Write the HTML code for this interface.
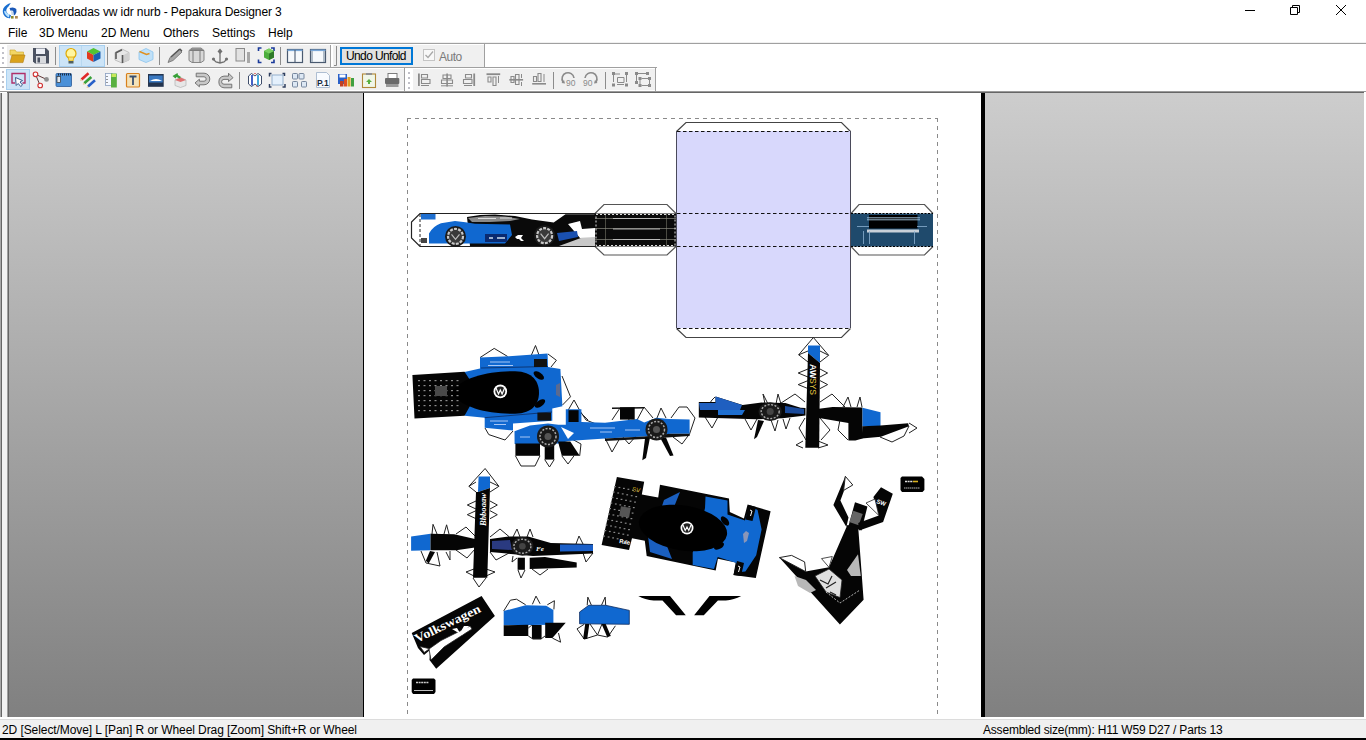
<!DOCTYPE html>
<html><head><meta charset="utf-8">
<style>
*{margin:0;padding:0;box-sizing:border-box}
html,body{width:1366px;height:740px;overflow:hidden;background:#fff;font-family:"Liberation Sans",sans-serif;font-size:12px;color:#000}
.abs{position:absolute}
#title{left:23px;top:5px;font-size:12px;line-height:14px;white-space:nowrap;letter-spacing:-0.1px;color:#000}
.menu{top:26px;font-size:12px;line-height:14px;white-space:nowrap}
.grad{background:linear-gradient(#cdcdcd,#808080)}
.st{font-size:12px;line-height:14px;white-space:nowrap;top:723px;color:#000}
svg{position:absolute;left:0;top:0}
</style></head><body>
<div class="abs" style="left:0;top:0;width:1366px;height:42px;background:#fff"></div>
<div class="abs" style="left:0;top:42px;width:1366px;height:1px;background:#f0f0f0"></div>
<div class="abs" style="left:0;top:43px;width:1366px;height:1px;background:#a0a0a0"></div>
<div class="abs" id="title">keroliverdadas vw idr nurb - Pepakura Designer 3</div>
<div class="abs menu" style="left:8px">File</div>
<div class="abs menu" style="left:39px">3D Menu</div>
<div class="abs menu" style="left:101px">2D Menu</div>
<div class="abs menu" style="left:163px">Others</div>
<div class="abs menu" style="left:212px">Settings</div>
<div class="abs menu" style="left:268px">Help</div>
<!-- toolbars -->
<div class="abs" style="left:7px;top:45px;width:324px;height:22px;background:#f0f0f0"></div>
<div class="abs" style="left:333px;top:45px;width:151px;height:22px;background:#f0f0f0"></div>
<div class="abs" style="left:0;top:67px;width:657px;height:1px;background:#a0a0a0"></div>
<div class="abs" style="left:7px;top:69px;width:398px;height:21px;background:#f0f0f0"></div>
<div class="abs" style="left:413px;top:69px;width:242px;height:21px;background:#f0f0f0"></div>
<!-- canvas -->
<div class="abs" style="left:0;top:91px;width:1366px;height:1px;background:#9a9a9a"></div>
<div class="abs" style="left:7px;top:92px;width:1357px;height:1px;background:#666"></div>
<div class="abs" style="left:0;top:93px;width:1px;height:624px;background:#a8a8a8"></div><div class="abs" style="left:1px;top:93px;width:1px;height:624px;background:#666"></div><div class="abs" style="left:2px;top:93px;width:5px;height:624px;background:#f2f2f2"></div>
<div class="abs" style="left:7px;top:93px;width:1px;height:624px;background:#a0a0a0"></div><div class="abs" style="left:8px;top:93px;width:1px;height:624px;background:#666"></div>
<div class="abs grad" style="left:9px;top:93px;width:354px;height:624px"></div>
<div class="abs" style="left:363px;top:93px;width:1px;height:624px;background:#000"></div>
<div class="abs" style="left:364px;top:93px;width:617px;height:624px;background:#fff"></div>
<div class="abs" style="left:981px;top:93px;width:4px;height:624px;background:#000"></div>
<div class="abs grad" style="left:985px;top:93px;width:379px;height:624px"></div>
<!-- status -->
<div class="abs" style="left:0;top:717px;width:1366px;height:2px;background:#fff"></div>
<div class="abs" style="left:0;top:719px;width:1366px;height:1px;background:#dcdcdc"></div>
<div class="abs" style="left:0;top:720px;width:1366px;height:18px;background:#f0f0f0"></div>
<div class="abs" style="left:0;top:738px;width:1366px;height:2px;background:#000"></div>
<div class="abs st" style="left:2px;letter-spacing:-0.08px">2D [Select/Move] L [Pan] R or Wheel Drag [Zoom] Shift+R or Wheel</div>
<div class="abs st" style="left:983px;letter-spacing:-0.2px">Assembled size(mm): H11 W59 D27 / Parts 13</div>
<svg width="1366" height="740" viewBox="0 0 1366 740">
<!-- app icon -->
<path d="M10.8 3 Q6 4 3.3 8.5 Q1.8 13 5 16.5 Q7 18.5 10 18.2 L11 15.2 Q8 15 6.5 12 Q5.5 9 8.5 6.5 Z" fill="#1a6fd0"/>
<path d="M4 11.5 Q5 15.5 9 17.5 L9.5 14.5 Q6.5 13.5 5 10.5Z" fill="#b8e2ff"/>
<path d="M9.5 8 Q14 6.5 16.3 9 Q17.2 12 15.3 14.5 L13.8 15.5 L13.3 11.5 Q12.8 10 10.5 10.8Z" fill="#1a58b8"/>
<path d="M11 11 L13 11.5 L13.5 15 L11.5 15z" fill="#c8d8e8"/>
<rect x="11" y="16" width="2.6" height="2.6" fill="#8a8a30"/><rect x="15" y="16" width="2.8" height="2.6" fill="#b08850"/>
<!-- window controls -->
<path d="M1245 10.5 h10" stroke="#000" stroke-width="1"/>
<path d="M1290.5 7.5 h7 v7 h-7z M1292.5 7.5 v-2 h7 v7 h-2" stroke="#000" stroke-width="1" fill="none"/>
<path d="M1336 5 l10 10 M1346 5 l-10 10" stroke="#000" stroke-width="1"/>
<rect x="2" y="47" width="2" height="2" fill="#c0c0c8"/>
<rect x="2" y="52" width="2" height="2" fill="#c0c0c8"/>
<rect x="2" y="57" width="2" height="2" fill="#c0c0c8"/>
<rect x="2" y="62" width="2" height="2" fill="#c0c0c8"/>
<rect x="2" y="71" width="2" height="2" fill="#c0c0c8"/>
<rect x="2" y="76" width="2" height="2" fill="#c0c0c8"/>
<rect x="2" y="81" width="2" height="2" fill="#c0c0c8"/>
<rect x="2" y="86" width="2" height="2" fill="#c0c0c8"/>
<rect x="408" y="72" width="2" height="2" fill="#c0c0c8"/>
<rect x="408" y="77" width="2" height="2" fill="#c0c0c8"/>
<rect x="408" y="82" width="2" height="2" fill="#c0c0c8"/>
<rect x="408" y="87" width="2" height="2" fill="#c0c0c8"/>
<rect x="55" y="47" width="1" height="18" fill="#8c8c8c"/>
<rect x="107" y="47" width="1" height="18" fill="#8c8c8c"/>
<rect x="159" y="47" width="1" height="18" fill="#8c8c8c"/>
<rect x="280" y="47" width="1" height="18" fill="#8c8c8c"/>
<rect x="239" y="72" width="1" height="17" fill="#8c8c8c"/>
<rect x="553" y="72" width="1" height="17" fill="#8c8c8c"/>
<rect x="605" y="72" width="1" height="17" fill="#8c8c8c"/>
<rect x="59.5" y="45.5" width="45" height="21" fill="#cce4f7" stroke="#a8d0f0"/>
<rect x="81" y="46" width="1" height="20" fill="#b8d8f0"/>
<rect x="6.5" y="69.5" width="23" height="20" fill="#cce4f7" stroke="#a8d0f0"/>
<path d="M10 50 h5 l1.5 2 h7 v3 h-13.5z" fill="#f3d665" stroke="#c9a227" stroke-width="0.6"/>
<path d="M12 55 h13 l-2 7.6 h-13z" fill="#d9a21b" stroke="#b07c10" stroke-width="0.6"/>
<path d="M33 48 h13 l3 3 v12.6 h-14 l-2 -2z" fill="#4c5362"/>
<rect x="36" y="48.5" width="9" height="5.5" fill="#eef0f6"/>
<rect x="36" y="56" width="10" height="7.5" fill="#d8dade"/><rect x="37.5" y="57.5" width="2.5" height="5" fill="#4c5362"/>
<circle cx="71" cy="53.5" r="5" fill="#fff6a0" stroke="#e0a800" stroke-width="1.2"/>
<path d="M68 57 h6 l-1 4 h-4z" fill="#f5e27a" stroke="#e0a800" stroke-width="0.8"/>
<rect x="68.5" y="61" width="5" height="2.5" fill="#506060"/>
<path d="M87 51.5 l6.5 -3.5 l7 3.5 l-7 3.5z" fill="#54c234"/>
<path d="M87 51.5 l6.5 3.5 v7 l-6.5 -3.5z" fill="#e23b1e"/>
<path d="M93.5 55 l7 -3.5 v7 l-7 3.5z" fill="#1c5fb0"/>
<path d="M115 52.5 l7 -3.5 l7 3.5 v7.5 l-7 3 l-7 -3z" fill="#e6e6e6" stroke="#b4b4b4" stroke-width="0.8"/>
<path d="M122.5 55.5 l6 -3 v7.5 l-6 3z" fill="#cfcfcf"/><path d="M115.5 53 l6.5 -3.2 M116 53 v6 M122.5 55 v8" stroke="#5a5a5a" stroke-width="1.6" fill="none"/>
<path d="M139 52 l7 -3.5 l7 3.5 v7.5 l-7 3 l-7 -3z" fill="#bfe0f8" stroke="#8cc4ee" stroke-width="0.8"/>
<path d="M139.5 51.5 l7 3 l3 -1" stroke="#e09020" stroke-width="1.5" fill="none"/>
<path d="M168 62.5 l2 -5 l9 -8.5 l3 3 l-9 8.5z" fill="#a8a8a8" stroke="#6e6e6e" stroke-width="0.8"/>
<path d="M171 57 l9 -8 l2 2" stroke="#555" stroke-width="1.2" fill="none"/>
<path d="M189 50.5 l3 -2.5 h9 l3 2.5 v10 l-3 2 h-9 l-3 -2z" fill="#d8d8d8" stroke="#7c7c7c" stroke-width="0.9"/>
<path d="M189.5 50.5 h14.5 M193 51 v11.5 M200 51 v11.5" stroke="#7c7c7c" stroke-width="1" fill="none"/>
<path d="M190 50 l2 -1.8 h9 l2 1.8z" fill="#8a8a8a"/>
<path d="M220 51 v11.5 M213 59 l3 3 l4 1 l4 -1 l3 -3" stroke="#707070" stroke-width="1.3" fill="none"/>
<path d="M220 48.5 l2.5 3 l-2.5 2.5 l-2.5 -2.5z" fill="#707070"/>
<circle cx="213.5" cy="59" r="1.6" fill="#707070"/><circle cx="226.5" cy="59" r="1.6" fill="#707070"/>
<rect x="236" y="48.5" width="8.5" height="12.5" fill="#e2e2e2" stroke="#8a8a8a" stroke-width="1"/>
<rect x="247" y="52" width="3" height="11" fill="#a8a8a8"/>
<path d="M258.5 51 v-3 h3 M271 48 h3 v3 M258.5 59.5 v3 h3 M274 59.5 v3 h-3" stroke="#1a3a9a" stroke-width="1.6" fill="none"/>
<path d="M264 51 l5 -2.5 l5 2.5 v6.5 l-5 2.5 l-5 -2.5z" fill="#4cae3c"/><path d="M269 53.5 l5 -2.5 v6.5 l-5 2.5z" fill="#2f7a28"/><path d="M264 51 l5 -2.5 l5 2.5 l-5 2.5z" fill="#78d060"/>
<rect x="287.5" y="49.5" width="15" height="13" fill="#f6f9fc" stroke="#4a5a70" stroke-width="1.2"/>
<rect x="287.5" y="49.5" width="15" height="1.6" fill="#7aa8d8"/><path d="M295 50 v12.5" stroke="#4a5a70" stroke-width="1.1"/>
<rect x="310.5" y="49.5" width="15" height="13" fill="#f6f9fc" stroke="#4a5a70" stroke-width="1.2"/>
<rect x="310.5" y="49.5" width="15" height="1.6" fill="#7aa8d8"/><rect x="311" y="51" width="2" height="11" fill="#b0bcc8"/><rect x="323" y="51" width="2" height="11" fill="#b0bcc8"/>
<rect x="330" y="45" width="1" height="22" fill="#a0a0a0"/>
<path d="M336.5 46 V65.5 H334" stroke="#8a8a8a" stroke-width="1" fill="none"/>
<rect x="484" y="44" width="1" height="23" fill="#a0a0a0"/>
<rect x="341" y="48" width="71" height="16" fill="#e1e1e1" stroke="#0078d7" stroke-width="2"/>
<rect x="423.5" y="49.5" width="11" height="11" fill="#f8f8f8" stroke="#c4c4c4" stroke-width="1"/>
<path d="M425.5 55 l2.5 2.5 l5 -6" stroke="#a8a8a8" stroke-width="1.3" fill="none"/>
<path d="M15 83 h-3 v-9.5 h13 v9.5 h-2.5" stroke="#b0306a" stroke-width="1.4" fill="none"/>
<path d="M15.5 77.5 l7 3 l-2.5 1.5 l2.5 3 l-1.8 1.5 l-2.5 -3 l-2 2z" fill="#fff" stroke="#2a4a80" stroke-width="0.9"/>
<path d="M35.5 74.3 L40.2 85.7 M35.5 74.3 L46.5 79.4" stroke="#502020" stroke-width="0.9" fill="none"/>
<circle cx="35.5" cy="74.3" r="2.3" fill="#fff" stroke="#d03030" stroke-width="1.1"/>
<circle cx="40.2" cy="85.5" r="2.3" fill="#fff" stroke="#d03030" stroke-width="1.1"/>
<circle cx="46.5" cy="79.4" r="2.4" fill="#909090"/>
<rect x="56" y="73.5" width="15.5" height="13" rx="1" fill="#4a90d8" stroke="#2a5a98" stroke-width="0.8"/>
<path d="M58 74.5 h13" stroke="#1a2a40" stroke-width="2" stroke-dasharray="1 1" fill="none"/>
<rect x="57" y="76.5" width="3.5" height="6" fill="#e0e8f0" stroke="#333" stroke-width="0.7"/>
<rect x="105.5" y="73.5" width="6.5" height="12" fill="#f4f8ff" stroke="#8aa0c0" stroke-width="0.8"/>
<path d="M107 76 v1 M107 79 v1 M107 82 v1" stroke="#333" stroke-width="1"/>
<rect x="111" y="73.5" width="5.8" height="14" fill="#58b040"/><rect x="111.5" y="74" width="4.5" height="3" fill="#c8e858"/>
<rect x="126.5" y="73.5" width="13" height="13.5" rx="1" fill="#f4e2b8" stroke="#d8801c" stroke-width="1.2"/>
<path d="M129.5 76.5 h7 M133 76.5 v8.5" stroke="#3a5070" stroke-width="1.8" fill="none"/>
<rect x="148" y="74" width="15.7" height="12.8" fill="#23344e"/><rect x="149" y="75.5" width="13.7" height="7" fill="#3a78c0"/>
<path d="M150 81 q6 -4 12 0z" fill="#fff"/>
<path d="M175 80 l5.5 -2.5 l5.5 2.5 v5.5 l-5.5 2 l-5.5 -2z" fill="#e6e6e6" stroke="#b0b0b0" stroke-width="0.7"/>
<path d="M175 80 l5.5 -2.5 l5.5 2.5 l-5.5 2z" fill="#e07070"/>
<path d="M172.5 76 l5 -3 l0.5 2 l3 2 l-1.5 1.5 l-3 -1.5 l-1 1.5z" fill="#38a038"/>
<path d="M196.2 73.2 H204 A5.8 5.8 0 0 1 204 84.8 H199.4 V86.8 L195 82.9 L199.4 79.2 V81.2 H204 A2.2 2.2 0 0 0 204 76.8 H196.2 Z" fill="#c8c8c8" stroke="#6a6a6a" stroke-width="0.9" stroke-linejoin="round"/>
<path d="M231.8 87.8 H224 A5.9 5.9 0 0 1 224 76.1 H228.5 V73.2 L233 77.7 L228.5 81.6 V79.4 H224 A2.4 2.4 0 0 0 224 84.2 H231.8 Z" fill="#c8c8c8" stroke="#6a6a6a" stroke-width="0.9" stroke-linejoin="round"/>
<path d="M248.5 76 l3 -2.5 l3.5 2.5 l3 -2.5 l3.5 2.5 v8 l-3.5 2.5 l-3 -2.5 l-3.5 2.5 l-3 -2.5z" fill="#fff" stroke="#2a3a5a" stroke-width="0.9"/>
<path d="M252 75 v10.5" stroke="#3050c0" stroke-width="1.8"/><path d="M258 75 v10.5" stroke="#30a0d8" stroke-width="1.8"/>
<path d="M254 73 l1 1.2 l1 -1.2z M256 86.5 l1 -1.2 l1 1.2z" fill="#d03030"/>
<rect x="272" y="75" width="11" height="10" fill="#e4f0fc" stroke="#8ca8c8" stroke-width="0.9"/>
<path d="M269.5 76.5 v-3 h2 M284.5 76 v-2.5 h-2 M269.5 84 v3 h2 M285 84 v3 h-2.5" stroke="#304060" stroke-width="1.5" fill="none"/>
<rect x="292.5" y="73.5" width="5" height="5.5" rx="0.8" fill="#dde8f4" stroke="#6a7c94" stroke-width="0.9"/>
<rect x="299" y="73.5" width="5" height="5.5" rx="0.8" fill="#dde8f4" stroke="#6a7c94" stroke-width="0.9"/>
<rect x="292.5" y="81.5" width="5" height="5.5" rx="0.8" fill="#dde8f4" stroke="#6a7c94" stroke-width="0.9"/>
<rect x="301.5" y="81.5" width="5" height="5.5" rx="0.8" fill="#dde8f4" stroke="#6a7c94" stroke-width="0.9"/>
<path d="M316.5 72.5 h10 l3 3 v12 h-13z" fill="#f8fbff" stroke="#9cb0c8" stroke-width="0.8"/>
<text x="317" y="85.5" font-family="Liberation Sans" font-weight="bold" font-size="8.5" fill="#1a2a3a">P.1</text>
<path d="M338 74 h9 v10 h-9z" fill="#2a60c8"/><rect x="339.5" y="74.5" width="6" height="3" fill="#fff"/>
<rect x="344" y="79" width="3" height="7.5" fill="#e05020"/><rect x="347.5" y="77" width="3" height="9.5" fill="#e0a020"/><rect x="351" y="78" width="3" height="8.5" fill="#40a040"/>
<rect x="340" y="81" width="3.5" height="5.5" fill="#c04020"/>
<rect x="362.5" y="74" width="13" height="13.5" fill="#f0f6e8" stroke="#b08838" stroke-width="1.1"/>
<rect x="366" y="73" width="6" height="2" fill="#909090"/><path d="M366 82 l3 -3 l3 3 h-2 v2 h-2 v-2z" fill="#58b040"/>
<rect x="388" y="73.5" width="9" height="5" fill="#fff" stroke="#707070" stroke-width="0.9"/>
<rect x="385" y="78" width="14.3" height="6" rx="1" fill="#6a6a6a"/><rect x="386" y="84" width="12.5" height="3" fill="#9a9a9a"/>
<rect x="404" y="68" width="1" height="23" fill="#a0a0a0"/>
<rect x="655" y="68" width="1" height="23" fill="#a0a0a0"/>
<g fill="#8a8a8a">
<rect x="418" y="73.5" width="1.8" height="12.5"/><path d="M421.5 74.5 h6 v3.5 h-6z M421.5 79.5 h8.5 v4 h-8.5z" fill="none" stroke="#8a8a8a" stroke-width="1.1"/><rect x="421" y="85" width="8" height="1"/>
<rect x="446.3" y="73.5" width="1.6" height="13"/><path d="M443 75 h8 v3.5 h-8z M441.5 80 h11 v3.5 h-11z" fill="none" stroke="#8a8a8a" stroke-width="1.1"/><rect x="441" y="85.3" width="12" height="1"/>
<rect x="473.3" y="73.5" width="1.8" height="12.5"/><path d="M465.5 74.5 h6 v3.5 h-6z M463.5 79.5 h8.5 v4 h-8.5z" fill="none" stroke="#8a8a8a" stroke-width="1.1"/><rect x="464" y="85" width="8" height="1"/>
<rect x="486.5" y="73.3" width="13.7" height="1.8"/><path d="M488 77 h3 v5 h-3z M493 77 h3 v8.5 h-3z" fill="none" stroke="#8a8a8a" stroke-width="1.1"/><rect x="498" y="76" width="1" height="7"/>
<rect x="509.3" y="79" width="13.8" height="1.6"/><path d="M511 76.5 h3 v6 h-3z M515.5 74.5 h3.5 v10 h-3.5z" fill="none" stroke="#8a8a8a" stroke-width="1.1"/><rect x="521" y="74" width="1" height="4"/><rect x="521" y="82" width="1" height="4"/>
<rect x="532.2" y="83" width="13.8" height="1.6"/><path d="M533.5 76.5 h3 v5 h-3z M538 73.5 h3 v8 h-3z" fill="none" stroke="#8a8a8a" stroke-width="1.1"/><rect x="543.5" y="74" width="1" height="8"/>
</g>
<path d="M563 82 a6 6 0 1 1 11 -4" stroke="#8a8a8a" stroke-width="1.6" fill="none"/><path d="M561.5 83 l3.5 0.5 l-1 -3.5z" fill="#8a8a8a"/>
<text x="566" y="86.3" font-family="Liberation Sans" font-size="8.5" fill="#8a8a8a">90</text>
<path d="M596 82 a6 6 0 1 0 -11 -4" stroke="#8a8a8a" stroke-width="1.6" fill="none"/><path d="M597.5 83 l-3.5 0.5 l1 -3.5z" fill="#8a8a8a"/>
<text x="583" y="86.3" font-family="Liberation Sans" font-size="8.5" fill="#8a8a8a">90</text>
<g fill="#8a8a8a"><rect x="612" y="72" width="3" height="3"/><rect x="625" y="72" width="3" height="3"/><rect x="612" y="83.5" width="3" height="3"/><rect x="625" y="83.5" width="3" height="3"/></g>
<path d="M615 74 h5 M613.5 75 v7 M626.5 75 v7 M617 84.5 h7 M617.5 77.5 h6.5 v5 h-6.5z" stroke="#8a8a8a" stroke-width="1" fill="none"/>
<g fill="#8a8a8a"><rect x="635" y="72" width="3" height="3"/><rect x="646" y="72" width="3" height="3"/><rect x="635" y="81" width="3" height="3"/><rect x="638.5" y="77" width="3" height="3"/><rect x="648" y="77" width="3" height="3"/><rect x="638.5" y="84" width="3" height="3"/><rect x="648" y="84" width="3" height="3"/></g>
<path d="M638 73.5 h8 M636.5 75 v6 M641.5 78.5 h6.5 M640 80 v4 M649.5 80 v4 M641.5 85.5 h6.5" stroke="#8a8a8a" stroke-width="1" fill="none"/>
<path d="M81.5 79.5 L88.5 73.3" stroke="#e02828" stroke-width="2.6"/><path d="M80.0 81.0 L82.4 80.5 L80.6 78.5z" fill="#e8c8a0"/>
<path d="M84.3 83.2 L91.3 77" stroke="#38a038" stroke-width="2.6"/><path d="M82.8 84.7 L85.2 84.2 L83.39999999999999 82.2z" fill="#e8c8a0"/>
<path d="M88 86.5 L95 80.3" stroke="#2860c8" stroke-width="2.6"/><path d="M86.5 88.0 L88.9 87.5 L87.1 85.5z" fill="#e8c8a0"/>
<defs><clipPath id="pg"><rect x="364" y="92" width="617" height="625"/></clipPath></defs>
<g clip-path="url(#pg)">
<path d="M407.5 118 V717 M937.5 118 V717 M407 118.5 H938" stroke="#8a8a8a" stroke-width="1" stroke-dasharray="4 4" fill="none"/>
<path d="M595 213.5 L604 204.5 H667 L676 213.5 M595 246.5 L604 255 H667 L676 246.5" stroke="#555" stroke-width="1.2" fill="#fff"/>
<path d="M851 213.5 L859 204.5 H924.5 L933 213.5 M851 246.5 L859 255 H924.5 L933 246.5" stroke="#555" stroke-width="1.2" fill="#fff"/>
<path d="M676.5 131.5 L686 122.5 H841.5 L850.5 131.5 M676.5 328.5 L686 337.5 H841.5 L850.5 328.5" stroke="#444" stroke-width="1.2" fill="#fff"/>
<rect x="676" y="131" width="175" height="197" fill="#d8d8fc"/><path d="M676.5 131 V328 M850.5 131 V328" stroke="#4a4a5a" stroke-width="1"/>
<path d="M677 131.5 H851 M677 213.5 H851 M677 246.5 H851 M677 328.5 H851" stroke="#111" stroke-width="1" stroke-dasharray="3.5 2.5"/>
<path d="M420 213.5 H595 V246.5 H420 L411.5 238 V222z" fill="#fff" stroke="#222" stroke-width="1.2"/>
<path d="M420 214 V246" stroke="#222" stroke-width="1" stroke-dasharray="3 2"/>
<rect x="421" y="214" width="14.5" height="5.5" fill="#1f6fd0"/>
<path d="M467 217 L480 215 L495 214.5 L515 216 L532 219.5 L553.7 222.5 L565.5 214.2 H595 V246 H470 Z" fill="#0a0a0a"/>
<path d="M429 243.5 V233.5 Q433 226 441 223.2 L455 220.9 L465.4 222.2 L475 223.8 L510 224.5 L512 235 L505 243.5 Z" fill="#1068d0"/>
<path d="M468 218 L485 216 L505 216.5 L520 219 L510 221 L490 222 L472 222z" fill="#8a8a8a"/>
<path d="M478 218.5 h18 M500 218 h12" stroke="#ddd" stroke-width="1"/>
<rect x="485" y="234" width="22" height="8" fill="#0a2a70"/>
<path d="M489 238 h4 M497 238 h8" stroke="#cde" stroke-width="1.5"/>
<path d="M515 237 l3 -2 h5 l-2 3 l3 3 h-3 l-2 -2 h-2z" fill="#fff"/>
<path d="M568 224 L580 221 L582 229 L595 228 V238 L580 238 Z" fill="#fff"/>
<path d="M559 246 L581.5 237.8 L595 237 V246Z" fill="#c8c8c8"/>
<path d="M557 233 L577 231 L578 237 L559 241Z" fill="#1a50b0"/>
<circle cx="455.5" cy="236.4" r="10.5" fill="#1a1a1a"/><circle cx="455.5" cy="236.4" r="7.5" fill="#3a3a3a" stroke="#c8c8c8" stroke-width="2.2" stroke-dasharray="3 1.2"/><path d="M451.5 234.4 l4 5 l4 -5" stroke="#bbb" stroke-width="1.2" fill="none"/>
<circle cx="544.6" cy="235.7" r="10.5" fill="#1a1a1a"/><circle cx="544.6" cy="235.7" r="7.5" fill="#3a3a3a" stroke="#c8c8c8" stroke-width="2.2" stroke-dasharray="3 1.2"/><path d="M540.6 233.7 l4 5 l4 -5" stroke="#bbb" stroke-width="1.2" fill="none"/>
<path d="M421 238 h6 v5 h-6z" fill="#444"/>
<rect x="595" y="213.5" width="81" height="33" fill="#0a0a0a"/>
<path d="M605.5 214 V246 M666.5 214 V246" stroke="#5a5a50" stroke-width="0.8"/>
<path d="M595 218.5 H676 M595 228.5 H676 M595 239.5 H676" stroke="#8a8a80" stroke-width="0.7"/>
<path d="M613 218.5 H660 M613 229 H660 M613 239.5 H660" stroke="#d0d0d0" stroke-width="0.8"/>
<path d="M596 214.5 H675 V245.5 H596Z" stroke="#ddd" stroke-width="1" stroke-dasharray="2 2" fill="none"/>
<rect x="851" y="213.5" width="82" height="33" fill="#1f4a6c"/>
<rect x="869" y="215" width="48.5" height="13.5" fill="#000"/>
<path d="M867 217.8 H920 M867 219.8 H920" stroke="#a8c8e0" stroke-width="0.9"/>
<rect x="867" y="229.5" width="52" height="3" fill="#c8d0d8"/>
<path d="M857 226.5 H869 M917 226.5 H927 M863.5 231 V244 M869.5 231 V244 M914.5 231 V244" stroke="#8ab0d0" stroke-width="0.8"/>
<path d="M851 213.5 H933 M851 246.5 H933" stroke="#000" stroke-width="1" stroke-dasharray="2 1.5"/><path d="M480 357.6 L494.2 348.4 L507.7 356.5" fill="none" stroke="#222" stroke-width="1" stroke-linejoin="round"/>
<path d="M531 356 L535.5 345.5 L539 355" fill="none" stroke="#222" stroke-width="1" stroke-linejoin="round"/>
<path d="M548 354 L556.4 360.3 L551 367" fill="none" stroke="#222" stroke-width="1" stroke-linejoin="round"/>
<path d="M562 376 L570.5 396.8 L562.5 405" fill="none" stroke="#222" stroke-width="1" stroke-linejoin="round"/>
<path d="M485 428 L488.8 434.6 L505 440 L513 431" fill="none" stroke="#222" stroke-width="1" stroke-linejoin="round"/>
<path d="M464.5 372 L480 368.4 L480 357.6 L509 356.2 L547.6 353.5 L548 367 L560.4 369 L562.4 406.2 L552.3 408.5 L552.3 420.7 L513 423.4 L513 430.5 L484.7 427.8 L484.7 417.7 L464.5 415.7Z" fill="#1068d0"/>
<path d="M412.4 375.1 L464.5 371.8 L470 380 L458 392.5 L470 406 L464.5 415.7 L414.5 418.4Z" fill="#050505"/>
<path d="M481 368 L548 366.5 M484.7 417.7 L552 412" stroke="#0a2a60" stroke-width="0.8" fill="none"/>
<path d="M451 392.7 C462 377 488 371 515 371.2 C533 371.5 539 382 539 392.7 C539 403 533 413.5 515 413.7 C488 414 462 408 451 392.7Z" fill="#000"/>
<circle cx="500.3" cy="391.4" r="6.8" fill="#fff"/><circle cx="500.3" cy="391.4" r="5" fill="#222"/><path d="M496 388 l2.5 6 l1.8 -4 l1.8 4 l2.5 -6" stroke="#fff" stroke-width="1.2" fill="none"/>
<ellipse cx="538.8" cy="375.5" rx="6" ry="3" transform="rotate(35 538.8 375.5)" fill="#000"/>
<ellipse cx="540" cy="403.5" rx="6" ry="3" transform="rotate(-35 540 403.5)" fill="#000"/>
<rect x="534" y="359" width="13" height="8" fill="#111"/>
<rect x="537.4" y="412.6" width="13.6" height="8" fill="#111"/>
<path d="M560 383 l-4 2 v10 l4 2z" fill="#5a6a90"/>
<path d="M490 362 h20 M488 365.5 h25 M490 421 h18 M494 424.5 h12" stroke="#cfe0ff" stroke-width="0.8"/>
<g fill="#8a8a8a"><rect x="418.0" y="380" width="2" height="1.2"/><rect x="418.0" y="385" width="2" height="1.2"/><rect x="418.0" y="390" width="2" height="1.2"/><rect x="418.0" y="395" width="2" height="1.2"/><rect x="418.0" y="400" width="2" height="1.2"/><rect x="418.0" y="405" width="2" height="1.2"/><rect x="418.0" y="410" width="2" height="1.2"/><rect x="423.5" y="380" width="2" height="1.2"/><rect x="423.5" y="385" width="2" height="1.2"/><rect x="423.5" y="390" width="2" height="1.2"/><rect x="423.5" y="395" width="2" height="1.2"/><rect x="423.5" y="400" width="2" height="1.2"/><rect x="423.5" y="405" width="2" height="1.2"/><rect x="423.5" y="410" width="2" height="1.2"/><rect x="429.0" y="380" width="2" height="1.2"/><rect x="429.0" y="385" width="2" height="1.2"/><rect x="429.0" y="390" width="2" height="1.2"/><rect x="429.0" y="395" width="2" height="1.2"/><rect x="429.0" y="400" width="2" height="1.2"/><rect x="429.0" y="405" width="2" height="1.2"/><rect x="429.0" y="410" width="2" height="1.2"/><rect x="434.5" y="380" width="2" height="1.2"/><rect x="434.5" y="385" width="2" height="1.2"/><rect x="434.5" y="390" width="2" height="1.2"/><rect x="434.5" y="395" width="2" height="1.2"/><rect x="434.5" y="400" width="2" height="1.2"/><rect x="434.5" y="405" width="2" height="1.2"/><rect x="434.5" y="410" width="2" height="1.2"/><rect x="440.0" y="380" width="2" height="1.2"/><rect x="440.0" y="385" width="2" height="1.2"/><rect x="440.0" y="390" width="2" height="1.2"/><rect x="440.0" y="395" width="2" height="1.2"/><rect x="440.0" y="400" width="2" height="1.2"/><rect x="440.0" y="405" width="2" height="1.2"/><rect x="440.0" y="410" width="2" height="1.2"/><rect x="445.5" y="380" width="2" height="1.2"/><rect x="445.5" y="385" width="2" height="1.2"/><rect x="445.5" y="390" width="2" height="1.2"/><rect x="445.5" y="395" width="2" height="1.2"/><rect x="445.5" y="400" width="2" height="1.2"/><rect x="445.5" y="405" width="2" height="1.2"/><rect x="445.5" y="410" width="2" height="1.2"/><rect x="451.0" y="380" width="2" height="1.2"/><rect x="451.0" y="385" width="2" height="1.2"/><rect x="451.0" y="390" width="2" height="1.2"/><rect x="451.0" y="395" width="2" height="1.2"/><rect x="451.0" y="400" width="2" height="1.2"/><rect x="451.0" y="405" width="2" height="1.2"/><rect x="451.0" y="410" width="2" height="1.2"/><rect x="456.5" y="380" width="2" height="1.2"/><rect x="456.5" y="385" width="2" height="1.2"/><rect x="456.5" y="390" width="2" height="1.2"/><rect x="456.5" y="395" width="2" height="1.2"/><rect x="456.5" y="400" width="2" height="1.2"/><rect x="456.5" y="405" width="2" height="1.2"/><rect x="456.5" y="410" width="2" height="1.2"/></g>
<rect x="435" y="386" width="12" height="10" fill="#4a4a4a"/>
<path d="M515.4 455.8 L521 466 L535 466 L540 455.8" fill="none" stroke="#222" stroke-width="1" stroke-linejoin="round"/>
<path d="M544.7 459.6 L549.5 467 L554.2 459.6" fill="none" stroke="#222" stroke-width="1" stroke-linejoin="round"/>
<path d="M561.8 455.8 L568 464 L574 455.8" fill="none" stroke="#222" stroke-width="1" stroke-linejoin="round"/>
<path d="M570 438 L581 444 L579.7 455.8" fill="none" stroke="#222" stroke-width="1" stroke-linejoin="round"/>
<path d="M558 436 L566 432 L568 425 L578 410 L588 420" fill="none" stroke="#222" stroke-width="1" stroke-linejoin="round"/>
<path d="M579.7 410.4 L586 420 L596 424" fill="none" stroke="#222" stroke-width="1" stroke-linejoin="round"/>
<path d="M568 410.4 L574 400 L579.7 410.4" fill="none" stroke="#222" stroke-width="1" stroke-linejoin="round"/>
<path d="M612 420 L620 408 L630 421" fill="none" stroke="#222" stroke-width="1" stroke-linejoin="round"/>
<path d="M605 438 L612 452 L620 438" fill="none" stroke="#222" stroke-width="1" stroke-linejoin="round"/>
<path d="M637 420 L644 407 L653 418" fill="none" stroke="#222" stroke-width="1" stroke-linejoin="round"/>
<path d="M657 418 L661 408 L666 418" fill="none" stroke="#222" stroke-width="1" stroke-linejoin="round"/>
<path d="M671 418 L679 407 L687 407 L695 418 L689.6 433.8" fill="none" stroke="#222" stroke-width="1" stroke-linejoin="round"/>
<path d="M673 437 L682 444 L689.6 433.8" fill="none" stroke="#222" stroke-width="1" stroke-linejoin="round"/>
<path d="M622 436 L629 444 L636 436" fill="none" stroke="#222" stroke-width="1" stroke-linejoin="round"/>
<path d="M612 408.2 L644.2 407.8" fill="none" stroke="#111" stroke-width="1.5" stroke-linejoin="round"/>
<path d="M514.5 431.2 L530 425.4 L548 423.5 L558.4 424.7 L565.8 424.7 L565.8 409.2 L581.4 409.2 L581.4 422 L605 422.7 L637 419 L644.2 422.4 L656.5 417.7 L668.8 419.1 L689.6 419.6 L689.6 433.8 L670.7 433.8 L644.2 436.6 L605 438.5 L568 441 L560 443.5 L540 444 L514.6 444Z" fill="#1068d0"/>
<path d="M520 437 h10 M590 428 h25 M600 432 h12 M625 430 h15" stroke="#cfe0ff" stroke-width="0.8"/>
<path d="M605 438.5 L644 436.6 L670 433.8 L689.6 433.8 L689.6 436 L644 439 L605 441z" fill="#111"/>
<path d="M515.4 443.5 L540 443.5 L540 455.8 L515.4 455.8Z" fill="#050505"/>
<path d="M544.7 444.5 L554.2 444.5 L554.2 459.6 L544.7 459.6Z" fill="#050505"/>
<path d="M558 441.6 L570.3 441.6 L579.7 455.8 L561.8 455.8Z" fill="#050505"/>
<path d="M568.5 410.2 L578.6 410.2 L578.6 422 L568.5 422Z" fill="#050505"/>
<path d="M561 427 L574 433 L568 439Z" fill="#fff"/>
<path d="M620 407.3 L634.7 407.3 L634.7 419.6 L620 419.6Z" fill="#050505"/>
<path d="M645.1 437.6 L650 437.6 L646 458 L642.3 460.3Z" fill="#050505"/>
<path d="M660 437.6 L666 437.6 L673.5 455.5 L670 456Z" fill="#050505"/>
<circle cx="548" cy="436.4" r="11" fill="#1a1a1a"/><circle cx="548" cy="436.4" r="8" fill="none" stroke="#aaa" stroke-width="1.5" stroke-dasharray="2 1.5"/><circle cx="548" cy="436.4" r="3.5" fill="#555"/>
<circle cx="656.5" cy="429.5" r="11" fill="#1a1a1a"/><circle cx="656.5" cy="429.5" r="8" fill="none" stroke="#aaa" stroke-width="1.5" stroke-dasharray="2 1.5"/><circle cx="656.5" cy="429.5" r="3.5" fill="#555"/>
<path d="M798.7 354.8 L813.4 337.5 L828.6 355.3" fill="none" stroke="#222" stroke-width="1" stroke-linejoin="round"/>
<path d="M808 351 L798.7 354.8 L808 362" fill="none" stroke="#222" stroke-width="1" stroke-linejoin="round"/>
<path d="M820 351 L828.6 355.3 L820 362" fill="none" stroke="#222" stroke-width="1" stroke-linejoin="round"/>
<path d="M808 369 L798.2 373 L808 377" fill="none" stroke="#222" stroke-width="1" stroke-linejoin="round"/>
<path d="M820 369 L827.6 373 L820 377" fill="none" stroke="#222" stroke-width="1" stroke-linejoin="round"/>
<path d="M808 380.6 L798.2 384.6 L808 388.6" fill="none" stroke="#222" stroke-width="1" stroke-linejoin="round"/>
<path d="M820 380.6 L827.6 384.6 L820 388.6" fill="none" stroke="#222" stroke-width="1" stroke-linejoin="round"/>
<path d="M805 402 L795 394 L778 405" fill="none" stroke="#222" stroke-width="1" stroke-linejoin="round"/>
<path d="M820 402 L832 394 L845 407" fill="none" stroke="#222" stroke-width="1" stroke-linejoin="round"/>
<path d="M715 397 L712 400 L705 410" fill="none" stroke="#222" stroke-width="1" stroke-linejoin="round"/>
<path d="M765 404 L763 394 L768 404" fill="none" stroke="#222" stroke-width="1" stroke-linejoin="round"/>
<path d="M776 404 L778 394 L781 404" fill="none" stroke="#222" stroke-width="1" stroke-linejoin="round"/>
<path d="M705 417 L712 428 L718 417" fill="none" stroke="#222" stroke-width="1" stroke-linejoin="round"/>
<path d="M745 419 L751 430 L757 419" fill="none" stroke="#222" stroke-width="1" stroke-linejoin="round"/>
<path d="M771 420 L775 431 L778 420" fill="none" stroke="#222" stroke-width="1" stroke-linejoin="round"/>
<path d="M783 419 L786 429 L790 418" fill="none" stroke="#222" stroke-width="1" stroke-linejoin="round"/>
<path d="M805 418 L799 428 L806 440" fill="none" stroke="#222" stroke-width="1" stroke-linejoin="round"/>
<path d="M820 418 L830 430 L821 440" fill="none" stroke="#222" stroke-width="1" stroke-linejoin="round"/>
<path d="M803 441 L796 445 L803 448" fill="none" stroke="#222" stroke-width="1" stroke-linejoin="round"/>
<path d="M818 441 L828 445 L818 448" fill="none" stroke="#222" stroke-width="1" stroke-linejoin="round"/>
<path d="M843 407 L848 397 L851 407" fill="none" stroke="#222" stroke-width="1" stroke-linejoin="round"/>
<path d="M857 407 L860 397 L862 407" fill="none" stroke="#222" stroke-width="1" stroke-linejoin="round"/>
<path d="M840 420 L838 430 L848 440" fill="none" stroke="#222" stroke-width="1" stroke-linejoin="round"/>
<path d="M855 438 L862 436" fill="none" stroke="#222" stroke-width="1" stroke-linejoin="round"/>
<path d="M880 437 L892 442 L904 436 L909 426" fill="none" stroke="#222" stroke-width="1" stroke-linejoin="round"/>
<path d="M909 423 L917 428 L909 433" fill="none" stroke="#222" stroke-width="1" stroke-linejoin="round"/>
<path d="M808 345.6 L820 345.6 L820 363 L808 353Z" fill="#1068d0"/>
<path d="M808 353 L820 363 L819.2 447.8 L805.3 447.8Z" fill="#050505"/>
<text x="0" y="0" transform="translate(810,364) rotate(90)" font-family="Liberation Sans" font-weight="bold" font-size="9" fill="#fff">AW</text>
<text x="0" y="0" transform="translate(810,378) rotate(90)" font-family="Liberation Sans" font-size="8.5" fill="#e8c840">SYS</text>
<path d="M698.8 402.1 L715.5 402 L715.5 396.4 L742.6 405 L761.6 402.6 L785.4 403.1 L800.6 407.8 L805.5 408 L805.5 415.4 L782.5 418.3 L756.8 419.3 L698.8 417.4Z" fill="#050505"/>
<path d="M699 403 L715.5 403 L715.5 396.4 L742 405 L740 410 L700 410Z" fill="#1f5fc0"/>
<path d="M718 410 L745 410 L742 415 L718 415Z" fill="#1f6fd0"/>
<path d="M785 406 L804 409 L804 414 L785 413Z" fill="#1a4a9a"/>
<ellipse cx="770.2" cy="411.6" rx="11.6" ry="9.3" fill="#1a1a1a"/><ellipse cx="770.2" cy="411.6" rx="9" ry="7" fill="none" stroke="#aaa" stroke-width="1.4" stroke-dasharray="2 1.5"/><circle cx="770.2" cy="411.6" r="3.5" fill="#444"/>
<path d="M758 420 L764 421 L757 437 L754 439.2Z" fill="#050505"/>
<path d="M819 408.7 L832.6 407 L862.5 407.4 L862.5 438.6 L855.4 440.4 L848.4 440.4 L848.4 423 L819 418Z" fill="#050505"/>
<path d="M862.5 407.8 L880.5 412.2 L880.5 426.3 L862.5 426.3Z" fill="#1068d0"/>
<path d="M862.5 426.3 L880.5 425.5 L908.1 423.2 L909 426.3 L880.9 436.8 L861.6 438.6Z" fill="#050505"/>
<path d="M468.9 486.3 L485.1 468.5 L498.9 486.3" fill="none" stroke="#222" stroke-width="1" stroke-linejoin="round"/>
<path d="M476 482 L468.9 486.3 L476 492" fill="none" stroke="#222" stroke-width="1" stroke-linejoin="round"/>
<path d="M490 482 L498.9 486.3 L490 492" fill="none" stroke="#222" stroke-width="1" stroke-linejoin="round"/>
<path d="M476 501 L467.3 505 L476 509" fill="none" stroke="#222" stroke-width="1" stroke-linejoin="round"/>
<path d="M490 501 L497.3 505 L490 509" fill="none" stroke="#222" stroke-width="1" stroke-linejoin="round"/>
<path d="M476 510.70000000000005 L467.3 514.7 L476 518.7" fill="none" stroke="#222" stroke-width="1" stroke-linejoin="round"/>
<path d="M490 510.70000000000005 L497.3 514.7 L490 518.7" fill="none" stroke="#222" stroke-width="1" stroke-linejoin="round"/>
<path d="M432 534 L433 524.3 L437 534" fill="none" stroke="#222" stroke-width="1" stroke-linejoin="round"/>
<path d="M444 534 L446.6 524.8 L449 534" fill="none" stroke="#222" stroke-width="1" stroke-linejoin="round"/>
<path d="M456 534 L466 527 L475 536" fill="none" stroke="#222" stroke-width="1" stroke-linejoin="round"/>
<path d="M421 551 L426 563 L440 566 L437 552" fill="none" stroke="#222" stroke-width="1" stroke-linejoin="round"/>
<path d="M450 551 L450 560 L446 552" fill="none" stroke="#222" stroke-width="1" stroke-linejoin="round"/>
<path d="M456 550 L467 558 L475 549" fill="none" stroke="#222" stroke-width="1" stroke-linejoin="round"/>
<path d="M474 569 L466 572 L474 576" fill="none" stroke="#222" stroke-width="1" stroke-linejoin="round"/>
<path d="M486 569 L495 572 L486 576" fill="none" stroke="#222" stroke-width="1" stroke-linejoin="round"/>
<path d="M473 578 L479 587 L486 578" fill="none" stroke="#222" stroke-width="1" stroke-linejoin="round"/>
<path d="M490 537 L500 529 L509 536.6" fill="none" stroke="#222" stroke-width="1" stroke-linejoin="round"/>
<path d="M490 552 L496 560 L509 553" fill="none" stroke="#222" stroke-width="1" stroke-linejoin="round"/>
<path d="M513 537 L517 529 L520 537" fill="none" stroke="#222" stroke-width="1" stroke-linejoin="round"/>
<path d="M527 537 L530 529 L533 537" fill="none" stroke="#222" stroke-width="1" stroke-linejoin="round"/>
<path d="M513 556 L512 562 L517 558" fill="none" stroke="#222" stroke-width="1" stroke-linejoin="round"/>
<path d="M518 570 L521 578 L525 570" fill="none" stroke="#222" stroke-width="1" stroke-linejoin="round"/>
<path d="M532 569 L540 575 L548 569" fill="none" stroke="#222" stroke-width="1" stroke-linejoin="round"/>
<path d="M576 544 L579 536 L583 544" fill="none" stroke="#222" stroke-width="1" stroke-linejoin="round"/>
<path d="M583 553 L586 562 L593 553" fill="none" stroke="#222" stroke-width="1" stroke-linejoin="round"/>
<path d="M478.6 476.6 L490 476.6 L490 488 L478 492Z" fill="#1068d0"/>
<path d="M478 492 L490 488 L487.3 577.7 L473 577.7 L476 492Z" fill="#050505"/>
<text x="0" y="0" transform="translate(486,526) rotate(-90)" font-family="Liberation Serif" font-weight="bold" font-style="italic" font-size="9" fill="#fff" textLength="33" lengthAdjust="spacingAndGlyphs">Bbboaaw</text>
<path d="M411.1 536.6 L430.5 533.7 L430.5 550.3 L411.1 550.7Z" fill="#1068d0"/>
<path d="M430.5 533.7 L454.2 534.2 L475 538.9 L475 547.4 L456.1 550.3 L430.5 550.3Z" fill="#050505"/>
<path d="M430 551 L435 552 L428.7 563.5 L425.8 560.7Z" fill="#050505"/>
<path d="M490 539 L508.6 536.6 L528.1 536.6 L550.8 543.1 L593 543.9 L593 553.6 L533 556 L490 552Z" fill="#050505"/>
<path d="M492 541 L510 540 L512 550 L492 549Z" fill="#2a3a80"/>
<path d="M560 544.5 L593 544.5 L593 551 L560 551.5Z" fill="#1a5fc8"/>
<text x="536" y="551" font-family="Liberation Serif" font-style="italic" font-weight="bold" font-size="7" fill="#fff">Fe</text>
<ellipse cx="522.4" cy="546.3" rx="11" ry="9.5" fill="#1a1a1a"/><ellipse cx="522.4" cy="546.3" rx="8.5" ry="7" fill="none" stroke="#aaa" stroke-width="1.4" stroke-dasharray="2 1.5"/><circle cx="522.4" cy="546.3" r="3.3" fill="#444"/>
<path d="M517.6 557.7 L524.9 557.7 L524.9 569.8 L517.6 569.8Z" fill="#050505"/>
<path d="M529.7 557.7 L545 557 L576.7 562.5 L576.7 567.4 L529.7 569Z" fill="#050505"/><path d="M616.9 476.9 L644.2 481.7 L641.8 494.5 L658.2 497.5 L660.0 484.8 L729.0 498.6 L729.8 512.0 L743.9 518.6 L747.6 504.5 L770.6 511.2 L755.8 578.0 L733.5 575.1 L735.7 562.5 L717.9 558.8 L715.7 570.6 L646.7 556.0 L644.8 540.7 L632.0 538.3 L629.0 549.9 L601.6 545.0Z" fill="#050505"/>
<path d="M705.5 496.5 L727.5 500.5 L727.5 514.5 L745.0 520.5 L749.5 506.0 L757.6 510.0 L761.6 529.6 L756.2 555.3 L745.4 571.5 L735.0 572.5 L736.5 563.0 L717.7 557.0 L714.0 569.0 L692.7 565.0 L692.7 552.6 L700.0 530.0 L705.0 508.0Z" fill="#1068d0"/>
<path d="M664.0 500.0 L680.0 492.0 L672.0 512.0 L660.0 512.0Z" fill="#1a5fc0"/>
<path d="M648.0 536.0 L665.0 541.0 L672.0 559.0 L650.0 552.0Z" fill="#1a5fc0"/>
<ellipse cx="683" cy="528" rx="44.5" ry="22.5" transform="rotate(9 683 528)" fill="#000"/>
<path d="M640 527 Q650 515 660 511 L640 520z" fill="#000"/>
<circle cx="687" cy="528" r="6.5" fill="#fff"/><circle cx="687" cy="528" r="4.8" fill="#222"/><path d="M683 525 l2.2 5.5 l1.8 -3.5 l1.8 3.5 l2.2 -5.5" stroke="#fff" stroke-width="1.1" fill="none"/>
<ellipse cx="725" cy="521" rx="5.5" ry="3" transform="rotate(50 725 521)" fill="#000"/>
<ellipse cx="719" cy="546" rx="5.5" ry="3" transform="rotate(-30 719 546)" fill="#000"/>
<path d="M743 534 l3 -3 l3 2 l-2 8 l-3 2z" fill="#8a96b8"/>
<path d="M748.5 505.0 L756.0 507.0 L752.5 521.0 L745.5 519.5Z" fill="#050505"/>
<path d="M750 510 l2 1 l-1.5 5" stroke="#fff" stroke-width="1" fill="none"/>
<path d="M737.0 561.0 L744.0 563.0 L741.0 576.0 L733.5 575.0Z" fill="#050505"/>
<path d="M738 566 l2 1 l-1.5 5" stroke="#fff" stroke-width="1" fill="none"/>
<g fill="#8a8a8a"><rect x="614.0" y="486.0" width="1.8" height="1.2"/><rect x="612.8" y="491.5" width="1.8" height="1.2"/><rect x="611.6" y="497.0" width="1.8" height="1.2"/><rect x="610.4" y="502.5" width="1.8" height="1.2"/><rect x="609.2" y="508.0" width="1.8" height="1.2"/><rect x="608.0" y="513.5" width="1.8" height="1.2"/><rect x="606.8" y="519.0" width="1.8" height="1.2"/><rect x="605.6" y="524.5" width="1.8" height="1.2"/><rect x="604.4" y="530.0" width="1.8" height="1.2"/><rect x="603.2" y="535.5" width="1.8" height="1.2"/><rect x="618.5" y="486.9" width="1.8" height="1.2"/><rect x="617.3" y="492.4" width="1.8" height="1.2"/><rect x="616.1" y="497.9" width="1.8" height="1.2"/><rect x="614.9" y="503.4" width="1.8" height="1.2"/><rect x="613.7" y="508.9" width="1.8" height="1.2"/><rect x="612.5" y="514.4" width="1.8" height="1.2"/><rect x="611.3" y="519.9" width="1.8" height="1.2"/><rect x="610.1" y="525.4" width="1.8" height="1.2"/><rect x="608.9" y="530.9" width="1.8" height="1.2"/><rect x="607.7" y="536.4" width="1.8" height="1.2"/><rect x="623.0" y="487.8" width="1.8" height="1.2"/><rect x="621.8" y="493.3" width="1.8" height="1.2"/><rect x="620.6" y="498.8" width="1.8" height="1.2"/><rect x="619.4" y="504.3" width="1.8" height="1.2"/><rect x="618.2" y="509.8" width="1.8" height="1.2"/><rect x="617.0" y="515.3" width="1.8" height="1.2"/><rect x="615.8" y="520.8" width="1.8" height="1.2"/><rect x="614.6" y="526.3" width="1.8" height="1.2"/><rect x="613.4" y="531.8" width="1.8" height="1.2"/><rect x="612.2" y="537.3" width="1.8" height="1.2"/><rect x="627.5" y="488.7" width="1.8" height="1.2"/><rect x="626.3" y="494.2" width="1.8" height="1.2"/><rect x="625.1" y="499.7" width="1.8" height="1.2"/><rect x="623.9" y="505.2" width="1.8" height="1.2"/><rect x="622.7" y="510.7" width="1.8" height="1.2"/><rect x="621.5" y="516.2" width="1.8" height="1.2"/><rect x="620.3" y="521.7" width="1.8" height="1.2"/><rect x="619.1" y="527.2" width="1.8" height="1.2"/><rect x="617.9" y="532.7" width="1.8" height="1.2"/><rect x="616.7" y="538.2" width="1.8" height="1.2"/><rect x="632.0" y="489.6" width="1.8" height="1.2"/><rect x="630.8" y="495.1" width="1.8" height="1.2"/><rect x="629.6" y="500.6" width="1.8" height="1.2"/><rect x="628.4" y="506.1" width="1.8" height="1.2"/><rect x="627.2" y="511.6" width="1.8" height="1.2"/><rect x="626.0" y="517.1" width="1.8" height="1.2"/><rect x="624.8" y="522.6" width="1.8" height="1.2"/><rect x="623.6" y="528.1" width="1.8" height="1.2"/><rect x="622.4" y="533.6" width="1.8" height="1.2"/><rect x="621.2" y="539.1" width="1.8" height="1.2"/><rect x="636.5" y="490.5" width="1.8" height="1.2"/><rect x="635.3" y="496.0" width="1.8" height="1.2"/><rect x="634.1" y="501.5" width="1.8" height="1.2"/><rect x="632.9" y="507.0" width="1.8" height="1.2"/><rect x="631.7" y="512.5" width="1.8" height="1.2"/><rect x="630.5" y="518.0" width="1.8" height="1.2"/><rect x="629.3" y="523.5" width="1.8" height="1.2"/><rect x="628.1" y="529.0" width="1.8" height="1.2"/><rect x="626.9" y="534.5" width="1.8" height="1.2"/><rect x="625.7" y="540.0" width="1.8" height="1.2"/></g>
<rect x="620" y="507" width="10" height="10" fill="#555" transform="rotate(10 625 512)"/>
<text x="632" y="491" font-family="Liberation Sans" font-size="6" fill="#d8b020" transform="rotate(10 632 491)">SV</text>
<text x="619" y="543" font-family="Liberation Sans" font-weight="bold" font-size="6" fill="#fff" transform="rotate(10 619 543)">Rae</text>
<path d="M902 476.5 H922 L924.4 479 V490 L922.5 492 H902 L900.5 490 V478Z" fill="#000"/>
<path d="M905 481.5 h8" stroke="#ddd" stroke-width="1.6" stroke-dasharray="2 0.6"/><path d="M913 481.5 h5" stroke="#d8b020" stroke-width="1.6"/><path d="M904 488 h16" stroke="#ccc" stroke-width="0.9" stroke-dasharray="1.5 0.5"/>
<path d="M845.3 476.3 L848.0 480.0 L840.4 500.6 L848.5 517.4 L846.4 527.1 L833.4 505.0Z" fill="#050505"/>
<path d="M855.0 502.3 L867.4 506.6 L861.5 530.4 L848.5 526.0Z" fill="#050505"/>
<rect x="851" y="512" width="10" height="12" fill="#666" transform="rotate(20 856 518)"/>
<path d="M873.4 497.0 L881.0 487.3 L892.8 493.8 L883.1 521.9 L859.3 530.5 L858.2 523.0 L878.8 515.4Z" fill="#050505"/>
<path d="M866.0 503.0 L875.0 499.0 L878.8 515.4Z" fill="#fff" stroke="#222" stroke-width="0.8" stroke-linejoin="round"/>
<text x="0" y="0" transform="translate(876,503) rotate(20)" font-family="Liberation Sans" font-weight="bold" font-size="6" fill="#fff">SW</text>
<path d="M847.4 525.1 L858.2 527.3 L860.4 556.5 L863.6 599.7 L839.9 624.6 L779.3 557.6 L805.7 571.6 L829.0 567.3Z" fill="#050505"/>
<path d="M845.3 476.3 L852.8 485.0 L843.6 490.4Z" fill="#fff" stroke="#222" stroke-width="1" stroke-linejoin="round"/>
<path d="M779.3 557.6 L791.6 555.4 L804.6 561.9 L805.7 571.6Z" fill="#fff" stroke="#222" stroke-width="1" stroke-linejoin="round"/>
<path d="M821.5 558.6 L832.3 556.5 L829.0 567.3Z" fill="#fff" stroke="#222" stroke-width="0.8" stroke-linejoin="round"/>
<path d="M794.5 576.0 L806.0 580.0 L816.0 590.0 L810.0 593.0 L798.0 586.0Z" fill="#b8b8b8"/>
<path d="M847.0 570.0 L858.0 554.3 L860.8 576.0 L851.0 576.0Z" fill="#b8b8b8"/>
<path d="M815.0 576.0 L829.0 569.0 L842.0 580.0 L840.0 597.6 L826.0 592.0Z" fill="#e0e0e0" stroke="#222" stroke-width="0.8" stroke-linejoin="round"/>
<path d="M820 580 l8 4 l4 -8 M826 588 l10 -6 M830 592 l6 3" stroke="#222" stroke-width="1.2" fill="none"/>
<path d="M826 592 L840 603 L860 590" stroke="#ddd" stroke-width="0.8" stroke-dasharray="2 1.5" fill="none"/>
<path d="M411.7 633.1 L481.6 596.0 L494.9 616.0 L436.2 668.8 L429.5 660.0 L430.0 650.0 L424.0 655.0 L418.0 648.0Z" fill="#050505"/>
<path d="M429.0 649.0 L441.0 640.5 L470.0 626.0 L472.0 629.0 L444.0 647.0 L431.0 660.0Z" fill="#fff" stroke="#222" stroke-width="0.8" stroke-linejoin="round"/>
<path d="M420.0 646.5 L429.5 648.7 L424.3 652.4Z" fill="#fff" stroke="#222" stroke-width="0.8" stroke-linejoin="round"/>
<path d="M452 629 l5 -1 l3 5 l4 -7 l5 0 l-7 9z" fill="#fff"/>
<text x="0" y="0" transform="translate(417,643) rotate(-26)" font-family="Liberation Serif" font-weight="bold" font-size="12.5" fill="#fff" textLength="72" lengthAdjust="spacingAndGlyphs">Volkswagen</text>
<path d="M413 678.5 H434 L435.5 680 V692 L434 694 H413 L411.7 692 V680Z" fill="#000"/>
<path d="M416 682.5 h13" stroke="#ccc" stroke-width="1.6" stroke-dasharray="2 0.6"/><path d="M414 690.5 h19" stroke="#eee" stroke-width="0.8"/>
<path d="M503.7 611.0 L510.4 600.2 L516.5 599.2 L525.7 604.8" fill="none" stroke="#222" stroke-width="1" stroke-linejoin="round"/>
<path d="M532.4 604.3 L536.0 596.1 L540.1 603.8" fill="none" stroke="#222" stroke-width="1" stroke-linejoin="round"/>
<path d="M547.3 604.8 L554.4 600.7 L553.9 609.4" fill="none" stroke="#222" stroke-width="1" stroke-linejoin="round"/>
<path d="M503.7 611.0 L525.7 605.3 L546.2 605.8 L553.4 609.9 L553.4 624.8 L503.7 625.3Z" fill="#1068d0"/>
<path d="M503.7 625.3 L528.3 624.8 L528.3 636.1 L503.7 636.1Z" fill="#050505"/>
<path d="M531.9 625.0 L541.6 625.0 L541.6 639.1 L531.9 639.1Z" fill="#050505"/>
<path d="M545.2 622.7 L565.7 622.7 L552.4 638.1 L545.2 638.1Z" fill="#050505"/>
<path d="M552.4 638.1 L560.6 642.2 L558.5 633.0" fill="none" stroke="#222" stroke-width="1" stroke-linejoin="round"/>
<path d="M528.3 628.0 L531.9 625.0" fill="none" stroke="#222" stroke-width="1" stroke-linejoin="round"/>
<path d="M528.3 636.0 L533.0 639.0 L541.0 639.0 L545.0 636.0" fill="none" stroke="#222" stroke-width="1" stroke-linejoin="round"/>
<path d="M587.2 605.3 L587.8 597.1 L591.3 605.0" fill="none" stroke="#222" stroke-width="1" stroke-linejoin="round"/>
<path d="M601.6 605.0 L605.2 597.1 L605.7 605.3" fill="none" stroke="#222" stroke-width="1" stroke-linejoin="round"/>
<path d="M579.6 612.0 L588.8 605.3 L605.7 605.3 L629.3 610.4 L629.3 624.3 L579.6 623.8Z" fill="#1068d0" stroke="#0a2a60" stroke-width="0.8" stroke-linejoin="round"/>
<path d="M584.2 624.3 L577.0 628.9 L584.2 639.1 L597.5 635.0 L607.7 637.1 L615.4 625.8" fill="none" stroke="#222" stroke-width="1" stroke-linejoin="round"/>
<path d="M590.0 624.0 L597.5 635.0 L602.0 624.0" fill="none" stroke="#222" stroke-width="1" stroke-linejoin="round"/>
<path d="M585.2 624.0 L589.3 624.0 L587.2 639.1 L583.1 639.0Z" fill="#050505"/>
<path d="M601.6 624.0 L605.7 624.0 L610.8 636.1 L607.2 637.1Z" fill="#050505"/>
<path d="M638.3 596 H670 L685.8 615.3 H676.1 L662.5 600.4 H653.7 Q645 600 638.3 596Z" fill="#000"/>
<path d="M741.2 596 H709.5 L694.1 615.3 H703.8 L717.9 600.4 H725.8 Q734 600 741.2 596Z" fill="#000"/></g>

</svg>
<div class="abs" style="left:346px;top:49px;font-size:12px;line-height:14px;white-space:nowrap;letter-spacing:-0.62px">Undo Unfold</div>
<div class="abs" style="left:439px;top:50px;font-size:12px;line-height:14px;color:#7a7a7a;letter-spacing:-0.5px">Auto</div>
</body></html>
